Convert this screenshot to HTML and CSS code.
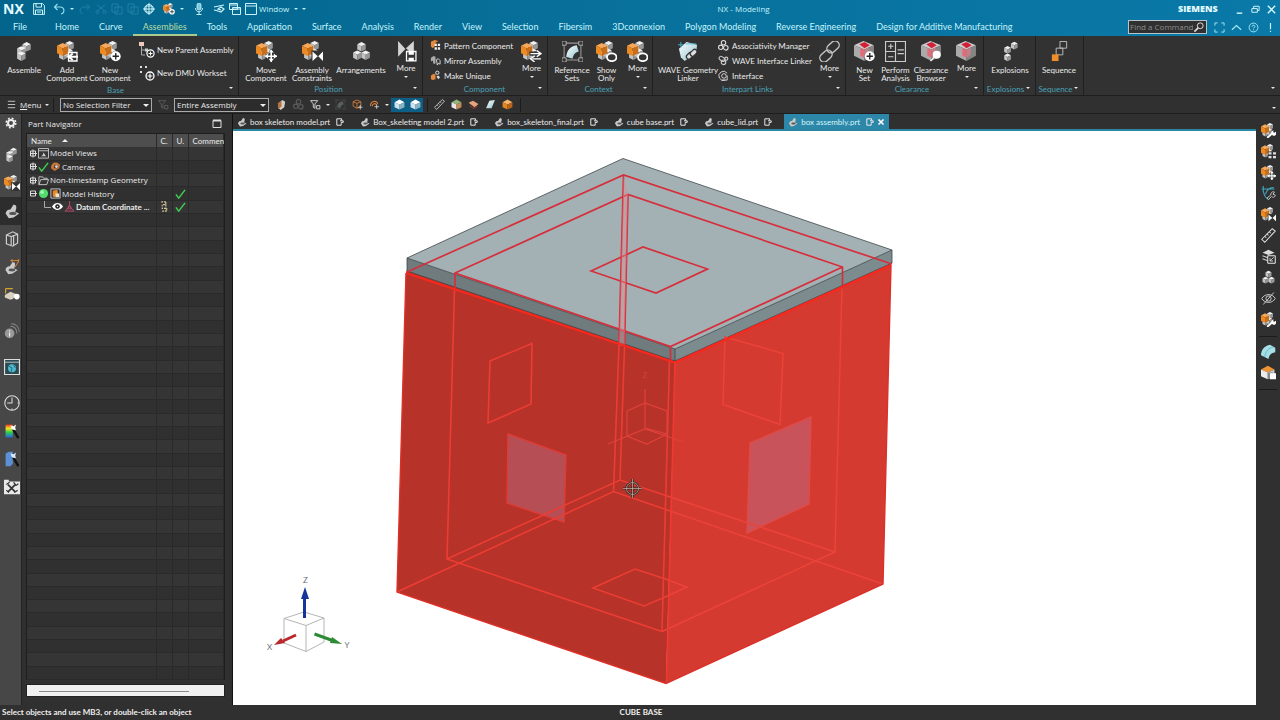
FILE: index.html
```html
<!DOCTYPE html>
<html lang="en">
<head>
<meta charset="utf-8">
<title>NX - Modeling</title>
<link rel="stylesheet" href="styles.css">
</head>
<body>
<svg class="defs" aria-hidden="true">
  <defs>
    <linearGradient id="rainbow" x1="0" y1="0" x2="0" y2="1"><stop offset="0" stop-color="#f03a1c"/><stop offset=".3" stop-color="#f2e32a"/><stop offset=".6" stop-color="#2fd04a"/><stop offset="1" stop-color="#2467e8"/></linearGradient>
    <linearGradient id="sheet" x1="0" y1="0" x2="1" y2="1"><stop offset="0" stop-color="#fff"/><stop offset="1" stop-color="#8fc4cf"/></linearGradient>
    <g id="gcube"><path d="M0 2 4 0 8 2 4 4z" fill="#f0f0f0"/><path d="M0 2 4 4V9L0 7z" fill="#c4c4c4"/><path d="M8 2 4 4V9L8 7z" fill="#979797"/></g>
    <g id="ocube"><path d="M0 3 6 0 12 3 6 6z" fill="#f7a858"/><path d="M0 3 6 6V14L0 11z" fill="#ee8a22"/><path d="M12 3 6 6V14L12 11z" fill="#c96e16"/></g>
  </defs>
  <symbol id="stack" viewBox="0 0 20 20"><use href="#gcube" x="8" y="1"/><use href="#gcube" x="3" y="5"/><use href="#gcube" x="3" y="10"/></symbol>
  <symbol id="comp" viewBox="0 0 20 20"><use href="#gcube" x="8" y="0"/><use href="#gcube" x="2" y="9"/><use href="#gcube" x="7" y="7"/><g transform="scale(.9)"><use href="#ocube" x="0" y="2"/></g></symbol>
  <symbol id="bplus" viewBox="0 0 20 20"><circle cx="15" cy="14.500" r="4.700" fill="#fff"/><path d="M12 14.500h6M15 11.500v6" stroke="#222" stroke-width="1.300"/></symbol>
  <symbol id="barrow" viewBox="0 0 20 20"><path d="M11 11h8v8h-8z" fill="#333" stroke="#fff" stroke-width="1.300"/><path d="M20 15h-8M15 12l-4 3 4 3" stroke="#fff" stroke-width="1.800" fill="none"/></symbol>
  <symbol id="bmove" viewBox="0 0 20 20"><path d="M9 14.500h11M14.500 9v11" stroke="#333" stroke-width="4"/><path d="M9 14.500h11M14.500 9v11" stroke="#fff" stroke-width="1.500"/><path d="M14.500 8l2.500 3h-5zM14.500 20l2.500-3h-5zM8.500 14.500l3-2.500v5zM20 14.500l-3-2.500v5z" fill="#fff"/></symbol>
  <symbol id="bbow" viewBox="0 0 20 20"><path d="M9 9h11v11H9z" fill="#333"/><path d="M10 10v9l5-4.500zM20 10v9l-4.500-4.500z" fill="#fff"/></symbol>
  <symbol id="bswap" viewBox="0 0 20 20"><path d="M8 12h9M14 17h5" stroke="#333" stroke-width="4"/><path d="M9 12h9M15 9l4 3-4 3M19 17h-8M13 14l-4 3 4 3" stroke="#fff" stroke-width="1.300" fill="none"/></symbol>
  <symbol id="beye" viewBox="0 0 20 20"><ellipse cx="15" cy="15.500" rx="4.500" ry="3.700" fill="#333" stroke="#fff" stroke-width="1.700"/></symbol>
  <symbol id="bgrid" viewBox="0 0 20 20"><path d="M9 10h11v10H9z" fill="#333"/><path d="M10 11h4v3h-4zM16 11h4v3h-4zM10 16h4v3h-4zM16 16h4v3h-4z" fill="#ddd"/></symbol>
  <symbol id="bwrench" viewBox="0 0 20 20"><path d="M9 19l6-5" stroke="#fff" stroke-width="2.500" stroke-linecap="round"/><path d="M14 14a3 3 0 0 1 3-4l-1 2 2 1 1.500-1.500A3 3 0 0 1 15 16z" fill="#fff"/></symbol>
  <symbol id="bdisk" viewBox="0 0 20 20"><path d="M10 10h9v9h-9z" fill="#333" stroke="#fff" stroke-width="1.200"/><path d="M12 10h5v3h-5zM12 16h5v3h-5z" fill="#fff"/></symbol>
  <symbol id="bow" viewBox="0 0 20 20"><path d="M2 0v15l7-7.500zM17 0v10H13L9.500 7z" fill="#d5d5d5"/></symbol>
  <symbol id="triple" viewBox="0 0 20 20"><use href="#gcube" x="6" y="1"/><use href="#gcube" x="2" y="9"/><use href="#gcube" x="10" y="9"/></symbol>
  <symbol id="parent" viewBox="0 0 16 16"><path d="M0 0h5v4H0z" fill="#f0c9bd"/><path d="M2.500 4v9M2.500 8H6M2.500 13H6" stroke="#aaa" fill="none"/><path d="M6 6.500h3v3H6z" fill="#ccc"/><circle cx="11.500" cy="11.500" r="3.600" fill="#333" stroke="#fff" stroke-width="1.200"/><path d="M9.500 11.500h4M11.500 9.500v4" stroke="#fff"/></symbol>
  <symbol id="dmu" viewBox="0 0 16 16"><path d="M1 1h2v2H1zM6 1h2v2H6zM1 6h2v2H1z" fill="#ddd"/><circle cx="11" cy="11" r="4" fill="#333" stroke="#fff" stroke-width="1.300"/><path d="M8.500 11h5M11 8.500v5" stroke="#fff" stroke-width="1.200"/></symbol>
  <symbol id="pattern" viewBox="0 0 12 12"><path d="M1 2l4-2 4 1-3 2v3l-3 3-2-2z" fill="#e58a3a"/><path d="M5 4h2.500v2.500H5zM8.500 4H11v2.500H8.500zM5 8h2.500v2.500H5zM8.500 8H11v2.500H8.500z" fill="#eee"/></symbol>
  <symbol id="mirror" viewBox="0 0 12 12"><path d="M1 3l3-2 2 1v7l-2 1-1-4-2 1z" fill="#aaa"/><path d="M7 5l2-1 2 2v4l-2-1-1 2z" fill="none" stroke="#ddd"/></symbol>
  <symbol id="unique" viewBox="0 0 12 12"><path d="M1 6l3-2 2 1v5l-3 1-2-1z" fill="#e58a3a"/><circle cx="8" cy="3" r="1.800" fill="none" stroke="#eee"/><path d="M7 7l2-1 2 2-2 2z" fill="#ddd"/></symbol>
  <symbol id="refset" viewBox="0 0 20 20"><path d="M2 2h16v16H2z" fill="none" stroke="#999"/><path d="M4 15C5 8 8 5 14 4l2 6c-4 1-5 3-6 7z" fill="url(#sheet)"/><path d="M0 0h4v4H0zM16 0h4v4h-4zM0 16h4v4H0zM16 16h4v4h-4z" fill="#333" stroke="#bbb" stroke-width=".8"/></symbol>
  <symbol id="wave" viewBox="0 0 22 22"><path d="M1 8 9 1l11 3-1 8-12 9-4-4z" fill="url(#sheet)"/><path d="M0 4h6M3 1v6M8 3h11" stroke="#49b6cf"/><g fill="#ddd" stroke="#333" stroke-width="1.300"><rect x="8" y="13" width="8" height="5" rx="2.500" transform="rotate(-45 12 15)"/><rect x="12" y="10" width="8" height="5" rx="2.500" transform="rotate(-45 16 12)"/></g></symbol>
  <symbol id="assoc" viewBox="0 0 12 12"><g fill="none" stroke="#ddd" stroke-width="1.200"><circle cx="6" cy="3" r="2.400"/><circle cx="3" cy="8" r="2.400"/><circle cx="8.500" cy="8.500" r="2.500"/></g></symbol>
  <symbol id="wil" viewBox="0 0 12 12"><g fill="none" stroke="#ccc" stroke-width="1.200"><rect x="1" y="2" width="7" height="4" rx="2" transform="rotate(30 4 4)"/><circle cx="6" cy="8" r="2.500"/><circle cx="9" cy="4" r="1.700"/></g></symbol>
  <symbol id="iface" viewBox="0 0 12 12"><g fill="none" stroke="#ddd"><path d="M10 3.500A5 5 0 1 0 8 11"/><circle cx="6.500" cy="6.500" r="2.500"/><path d="M10 6v5H4"/></g></symbol>
  <symbol id="chain" viewBox="0 0 20 20"><g fill="none" stroke="#c9c9c9" stroke-width="1.300"><rect x="7" y="2" width="13" height="8" rx="4" transform="rotate(-42 13 6)"/><rect x="0" y="10" width="13" height="8" rx="4" transform="rotate(-42 7 14)"/></g></symbol>
  <symbol id="clear" viewBox="0 0 20 20"><path d="M0 4 9 0l10 4-9 4z" fill="#ccc"/><path d="M0 4 10 8v11L0 14z" fill="#aaa"/><path d="M19 4 10 8v11l9-5z" fill="#858585"/><path d="M5 3l5-2 5 3-5 3z" fill="#d41f37"/><path d="M6 7l4 1v8l-4-2z" fill="#e36a78"/><path d="M10 8l4-2v7l-4 3z" fill="#c28088"/></symbol>
  <symbol id="bmag" viewBox="0 0 20 20"><path d="M9 19l4-4" stroke="#eee" stroke-width="1.500"/><circle cx="15" cy="13" r="3.800" fill="#fff"/></symbol>
  <symbol id="perform" viewBox="0 0 20 20"><path d="M.5.500h19v19H.5zM10 0v20M0 10h10M3 5h5M5.500 2.500v5M3 15h5M12 8.500h6M12 12h6" fill="none" stroke="#ccc" stroke-width="1.100"/></symbol>
  <symbol id="explode" viewBox="0 0 20 20"><g transform="scale(.8)"><use href="#gcube" x="13" y="1"/><use href="#gcube" x="5" y="6"/><use href="#gcube" x="5" y="15"/></g></symbol>
  <symbol id="seq" viewBox="0 0 20 22"><path d="M10.500.500h7v7h-7zM6.500 7.500h7v7h-7z" fill="none" stroke="#bbb"/><path d="M2 14h7v7H2z" fill="#f08c2a"/></symbol>
  <symbol id="part" viewBox="0 0 20 20"><path d="M2 13C3 9 5 8 8 8l4-6 3 1c1 3 0 5-1 8l5 2-7 5-6 1z" fill="#c9c9c9"/><ellipse cx="11" cy="13" rx="4.500" ry="2" fill="#555"/></symbol>
  <symbol id="doc" viewBox="0 0 10 10"><path d="M7 1H1v8h5.500V6.500M5 3.500h4v2H6M7 1v2" fill="none" stroke="#eee" stroke-width="1.200"/></symbol>
  <symbol id="save" viewBox="0 0 12 12"><path d="M.6.600h9l1.800 1.800v9H.6zM3 .6v3.500h5.500V.6M2.500 11.400V7h7v4.400M4 9h4" fill="none" stroke="#c9f3fa"/></symbol>
  <symbol id="undo" viewBox="0 0 12 12"><path d="M4.500 1 1.500 4l3 3M1.500 4H7c5 0 5 6 1 7" fill="none" stroke="#8fdcec" stroke-width="1.200"/></symbol>
  <symbol id="redo" viewBox="0 0 12 12"><path d="M7.500 1l3 3-3 3M10.500 4H5c-5 0-5 6-1 7" fill="none" stroke="#1e80a4"/></symbol>
  <symbol id="cut" viewBox="0 0 12 12"><path d="M2 2l8 6M10 2 2 8" stroke="#1e80a4"/><circle cx="2.500" cy="9" r="1.500" fill="none" stroke="#1e80a4"/><circle cx="9.500" cy="9" r="1.500" fill="none" stroke="#1e80a4"/></symbol>
  <symbol id="copy" viewBox="0 0 12 12"><path d="M1 1h6v8H1zM4 4h7v7H4z" fill="none" stroke="#1e80a4"/></symbol>
  <symbol id="target" viewBox="0 0 12 12"><path d="M3 3h6v6H3zM6 0v12M0 6h12" fill="none" stroke="#c9f3fa"/><circle cx="6" cy="6" r="4.500" fill="none" stroke="#c9f3fa"/></symbol>
  <symbol id="mic" viewBox="0 0 12 12"><rect x="4" y="0" width="4" height="7" rx="2" fill="#7fc8dc" stroke="#c9f3fa" stroke-width=".8"/><path d="M2.500 5c0 5 7 5 7 0M6 9v3M3.500 11.500h5" fill="none" stroke="#c9f3fa"/></symbol>
  <symbol id="touch" viewBox="0 0 12 12"><path d="M1 4l5-1 5-1M1 7l4 1 3 1 3-3-3-2-3 2 3 1" fill="none" stroke="#c9f3fa" stroke-width="1.200"/></symbol>
  <symbol id="wins" viewBox="0 0 12 12"><path d="M.5.500h8v6h-8zM.5 2h8M3.500 4.500h8v7h-8zM3.500 6h8" fill="#0a6a92" stroke="#c9f3fa"/></symbol>
  <symbol id="win" viewBox="0 0 12 12"><path d="M.5.500h11v11H.5zM.5 3h11" fill="none" stroke="#c9f3fa"/></symbol>
  <symbol id="gear" viewBox="0 0 12 12"><circle cx="6" cy="6" r="4.800" fill="none" stroke="#eee" stroke-width="1.500" stroke-dasharray="2 1.770"/><circle cx="6" cy="6" r="3" fill="none" stroke="#eee" stroke-width="2"/></symbol>
  <symbol id="box" viewBox="0 0 20 20"><path d="M3 5 11 1l6 3v11l-6 4-8-3zM3 5l6 2 8-3M9 7v12M12 6v12" fill="none" stroke="#ccc" stroke-width="1.500"/></symbol>
  <symbol id="partdim" viewBox="0 0 20 20"><use href="#part" width="18" height="18" x="0" y="2"/><path d="M8 2h11M10 0v4M18 0v4M18 3l-4 7" stroke="#d88632" stroke-width="1.200"/></symbol>
  <symbol id="reuse" viewBox="0 0 20 20"><path d="M1 10l7-4 8 3-5 6-3 1-7-3z" fill="#d8d0c0"/><path d="M2 2v6M2 2h9" stroke="#d8a030" stroke-width="1.500"/><circle cx="16" cy="12" r="3.500" fill="#fff"/></symbol>
  <symbol id="info" viewBox="0 0 20 20"><circle cx="7" cy="13" r="6" fill="#999"/><path d="M7 9v1.500M7 12v5" stroke="#eee" stroke-width="1.500"/><path d="M8 4c5 0 8 3 8 9M9 1c6 0 10 4 10 10" fill="none" stroke="#888" stroke-width="1.300"/></symbol>
  <symbol id="web" viewBox="0 0 20 20"><path d="M.7.700h18.600v18.600H.7z" fill="#2c4a52" stroke="#ddd" stroke-width="1.400"/><path d="M0 4h20" stroke="#ddd"/><circle cx="10" cy="11.500" r="5" fill="#4cb9cf"/><path d="M6 9l4 2-1 5M12 7l2 4" stroke="#2a5560" fill="none"/></symbol>
  <symbol id="clock" viewBox="0 0 20 20"><circle cx="10" cy="10" r="9" fill="none" stroke="#ddd" stroke-width="1.300"/><path d="M10 3v7H4M10 17v2M17 10h2" fill="none" stroke="#ddd" stroke-width="1.300"/></symbol>
  <symbol id="paint" viewBox="0 0 20 20"><path d="M2 2h9v16H2z" fill="url(#rainbow)"/><path d="M11 7l7 12" stroke="#111" stroke-width="3"/><path d="M8 3l4 1 3-2-1 4 1 3-5-1z" fill="#fff"/></symbol>
  <symbol id="process" viewBox="0 0 20 20"><path d="M2 3l4-2h5v15l-3 3H2z" fill="#5b8fd6"/><path d="M11 7l7 12" stroke="#111" stroke-width="3"/><path d="M8 3l4 1 3-2-1 4 1 3-5-1z" fill="#dce8ff"/></symbol>
  <symbol id="tools" viewBox="0 0 20 20"><path d="M0 1h6v2h14v16H0z" fill="#e8e8e8"/><path d="M5 16 14 7M5 7l9 9" stroke="#333" stroke-width="2.200"/><path d="M3 7l4-3M12 4l3 4 3-2M13 17l4-3M3 14l3 3" stroke="#333" stroke-width="1.500" fill="none"/></symbol>
  <symbol id="curvew" viewBox="0 0 20 20"><path d="M1 4h17M3 0v7c2 8 4 10 8 11M6 11c2-7 6-9 11-9" fill="none" stroke="#3fa5ba" stroke-width="1.500"/><path d="M8 16l5-4c0-4 3-5 5-4l-2 3 3 1c0 3-3 4-5 2l-4 4z" fill="#333" stroke="#ccc" stroke-width="1.200"/></symbol>
  <symbol id="ruler" viewBox="0 0 20 20"><path d="M1 15 15 1l4 3L5 19zM5 11l2 2M8 8l2 2M11 5l2 2" fill="none" stroke="#ddd" stroke-width="1.400"/></symbol>
  <symbol id="layers" viewBox="0 0 20 20"><path d="M2 5l8-4 8 4-8 3z" fill="#ddd"/><path d="M2 9l8 3M2 13l8 3" stroke="#ccc" stroke-width="1.500"/><path d="M9 9h10v10H9z" fill="#333" stroke="#eee" stroke-width="1.300"/><path d="M17 11l-5 5M12 12v4h4" stroke="#eee" fill="none"/></symbol>
  <symbol id="hide" viewBox="0 0 20 20"><path d="M1 10c4-7 14-7 18 0-4 7-14 7-18 0zM3 18 17 2" fill="none" stroke="#ccc" stroke-width="1.300"/><circle cx="10" cy="10" r="3.500" fill="none" stroke="#ccc" stroke-width="1.300"/></symbol>
  <symbol id="shell" viewBox="0 0 20 20"><path d="M0 15C0 8 5 2 12 1l7 4v6c-6 1-8 4-9 9z" fill="#a5dfe8"/><path d="M5 17C6 10 10 5 17 4" stroke="#5da9b5" fill="none"/></symbol>
  <symbol id="bcopy" viewBox="0 0 20 20"><path d="M9 10h7v8H9z" fill="#888"/><path d="M12 11h8v8h-8z" fill="#fff"/></symbol>
  <symbol id="halfcube" viewBox="0 0 20 20"><path d="M0 6 9 1l9 5-9 4z" fill="#ee9432"/><path d="M0 6l9 4v9l-9-4z" fill="#ececec"/><path d="M18 6l-9 4v9l9-4z" fill="#c9c9c9"/></symbol>
  <symbol id="solid" viewBox="0 0 20 20"><path d="M1 6 10 1l9 5-9 4z" fill="#f7b36b"/><path d="M1 6l9 4v9l-9-4z" fill="#e0861f"/><path d="M19 6l-9 4v9l9-4z" fill="#b8651a"/></symbol>
  <symbol id="wcube" viewBox="0 0 20 20"><path d="M1 6 10 1l9 5-9 4z" fill="#fff"/><path d="M1 6l9 4v9l-9-4z" fill="#cfe3ea"/><path d="M19 6l-9 4v9l9-4z" fill="#89b2c2"/></symbol>
  <symbol id="gsolid" viewBox="0 0 20 20"><path d="M1 6 10 1l9 5-9 4z" fill="#8fb77a"/><path d="M1 6l9 4v9l-9-4z" fill="#e8e8e8"/><path d="M19 6l-9 4v9l9-4z" fill="#c98a5a"/></symbol>
  <symbol id="face" viewBox="0 0 20 20"><path d="M1 7l8-4 10 6-7 6z" fill="#e9a27e"/><path d="M3 12l7 5 7-4" stroke="#8c3b28" stroke-width="2" fill="none"/></symbol>
  <symbol id="sheeti" viewBox="0 0 20 20"><path d="M2 17 8 3l10-1-6 15z" fill="url(#sheet)"/></symbol>
  <symbol id="funnel" viewBox="0 0 20 20"><path d="M1 3h13l-5 6v8l-3-2V9zM12 12h6v6h-6z" fill="none" stroke="currentColor" stroke-width="1.500"/></symbol>
  <symbol id="ring" viewBox="0 0 20 20"><path d="M3 13C2 4 14 1 16 9M6 13c0-5 6-6 8-2" fill="none" stroke="#d9803a" stroke-width="2"/><path d="M10 14h8M14 10v8" stroke="#ddd" stroke-width="1.500"/></symbol>
  <symbol id="wirebox" viewBox="0 0 20 20"><path d="M2 5l7-3 7 3v8l-7 4-7-4zM2 5l7 3 7-3M9 8v9" fill="none" stroke="#d9803a" stroke-width="1.500"/><path d="M11 15h8M15 11v8" stroke="#ddd" stroke-width="1.500"/></symbol>
  <symbol id="check" viewBox="0 0 12 12"><path d="M1 7l3 4 7-9" fill="none" stroke="#3fd055" stroke-width="1.600"/></symbol>
  <symbol id="plus" viewBox="0 0 8 8"><path d="M1.500 1.500h5v5h-5zM2 4h6M4 0v8" fill="none" stroke="#ddd"/></symbol>
  <symbol id="minus" viewBox="0 0 8 8"><path d="M1.500 1.500h5v5h-5zM2 4h6" fill="none" stroke="#ddd"/></symbol>
  <symbol id="views" viewBox="0 0 12 12"><path d="M.5.500h11v10.500H.5zM.5 3h11" fill="none" stroke="#ccc"/><path d="M3 9l2-1 1-3 2 3 1 1z" fill="#ccc"/></symbol>
  <symbol id="camera" viewBox="0 0 12 12"><path d="M1 8c0-5 3-7 7-6l3 2-1 4-5 3z" fill="#c9763a"/><path d="M4 8l1-4 4 1-1 3z" fill="#4a3326"/><circle cx="7" cy="6" r="1.500" fill="#ddd"/></symbol>
  <symbol id="filt" viewBox="0 0 12 12"><path d="M2 5l5-4 3 2-1 6-4 3-2-2z" fill="#d2cfc9"/><path d="M2 5l4-3v6l-3 3z" fill="#b8703c"/></symbol>
  <symbol id="folder" viewBox="0 0 12 12"><path d="M1 10.500V2h4l1 1.500h4V5M1 10.500 3 5h8.500l-2 5.500z" fill="none" stroke="#ccc"/></symbol>
  <symbol id="hist" viewBox="0 0 12 12"><path d="M1 1h10v10H1z" fill="none" stroke="#ccc"/><path d="M3 3l5-1 1 5-4 3-2-1z" fill="#e88a2c"/><path d="M6 6h4v4H6z" fill="#f3e2c8"/></symbol>
  <symbol id="eye" viewBox="0 0 12 12"><path d="M0 6c3-5 9-5 12 0-3 5-9 5-12 0z" fill="#fff"/><circle cx="6" cy="6" r="2.500" fill="#222"/><circle cx="6" cy="6" r=".8" fill="#fff"/></symbol>
  <symbol id="csys" viewBox="0 0 12 12"><path d="M6 0v6L1 11M6 6l5 5M3.500 8.500h5l-2.500-4zM1 11h10" fill="none" stroke="#c04a6a"/></symbol>
  <symbol id="sigma" viewBox="0 0 8 12"><path d="M1 1h5v3H2v4h5v3H1M6 1v10" fill="none" stroke="#d8c49a" stroke-width="1.200" stroke-dasharray="2 1"/></symbol>
</svg>

<header class="title">
  <div class="quick">
    <strong class="nx">NX</strong>
    <button aria-label="Save"><svg><use href="#save"/></svg></button>
    <button class="sp" aria-label="Undo"><svg><use href="#undo"/></svg></button>
    <i class="caret"></i>
    <button aria-label="Redo"><svg><use href="#redo"/></svg></button>
    <button aria-label="Cut"><svg><use href="#cut"/></svg></button>
    <button aria-label="Copy"><svg><use href="#copy"/></svg></button>
    <button aria-label="Paste"><svg><use href="#copy"/></svg></button>
    <button aria-label="Fit"><svg><use href="#target"/></svg></button>
    <button class="sp" aria-label="Component"><svg><use href="#comp"/><use href="#bplus"/></svg></button>
    <i class="caret"></i>
    <button class="sp" aria-label="Voice"><svg><use href="#mic"/></svg></button>
    <button class="sp" aria-label="Touch mode"><svg><use href="#touch"/></svg></button>
    <button aria-label="Switch window"><svg><use href="#wins"/></svg></button>
    <button class="winbtn"><svg><use href="#win"/></svg>Window <i class="caret"></i></button>
    <i class="caret bar"></i>
  </div>
  <h1>NX - Modeling</h1>
  <b class="brand">SIEMENS</b>
  <div class="wc">
    <button aria-label="Minimize"><svg viewBox="0 0 12 12"><path d="M3 10h6" stroke="#d9fbff" stroke-width="1.500"/></svg></button>
    <button aria-label="Restore"><svg viewBox="0 0 12 12"><path d="M2 5h6v4H2zM4 5V2.500h6V7H8" fill="none" stroke="#d9fbff"/></svg></button>
    <button aria-label="Close"><svg viewBox="0 0 12 12"><path d="M2 2l8 8M10 2l-8 8" stroke="#d9fbff" stroke-width="1.500"/></svg></button>
  </div>
</header>

<nav class="menu">
  <button>File</button><button>Home</button><button>Curve</button><button class="on">Assemblies</button><button>Tools</button><button>Application</button><button>Surface</button><button>Analysis</button><button>Render</button><button>View</button><button>Selection</button><button>Fibersim</button><button>3Dconnexion</button><button>Polygon Modeling</button><button>Reverse Engineering</button><button>Design for Additive Manufacturing</button>
  <div class="find"><input type="text" placeholder="Find a Command" aria-label="Find a Command"><svg viewBox="0 0 12 12"><circle cx="7.500" cy="4.500" r="3.500" fill="none" stroke="#ddd" stroke-width="1.200"/><path d="M5 7l-4.500 4.500" stroke="#ddd" stroke-width="2"/></svg></div>
  <div class="wc tools">
    <button aria-label="Full screen"><svg viewBox="0 0 12 12"><path d="M1 4V1h3M8 1h3v3M11 8v3H8M4 11H1V8" fill="none" stroke="#a8eaf5"/></svg></button>
    <button aria-label="Collapse ribbon"><svg viewBox="0 0 12 12"><path d="M1 8.500 6 4l5 4.500" fill="none" stroke="#a8eaf5" stroke-width="1.300"/></svg></button>
    <button aria-label="Help"><svg viewBox="0 0 12 12"><circle cx="6" cy="6" r="4.800" fill="none" stroke="#a8eaf5"/><path d="M4.500 5c0-2 3-2 3 0 0 1-1.500 1-1.500 2M6 8v1.200" fill="none" stroke="#a8eaf5"/></svg></button>
    <button aria-label="Alerts"><svg viewBox="0 0 12 12"><path d="M6 1v7M6 9.500V11" stroke="#c9f3fa" stroke-width="1.300"/></svg></button>
  </div>
</nav>

<section class="ribbon" aria-label="Assemblies ribbon">
  <div class="group g1">
    <div class="items">
      <button class="big w46"><svg><use href="#stack"/></svg>Assemble</button>
      <button class="big w38b"><svg><use href="#comp"/><use href="#barrow"/></svg>Add<br>Component</button>
      <button class="big w46"><svg><use href="#comp"/><use href="#bplus"/></svg>New<br>Component</button>
      <div class="rows two">
        <button><svg><use href="#parent"/></svg>New Parent Assembly</button>
        <button><svg><use href="#dmu"/></svg>New DMU Workset</button>
      </div>
    </div>
    <h2>Base</h2><i class="caret corner"></i>
  </div>
  <div class="group g2">
    <div class="items">
      <button class="big w46"><svg><use href="#comp"/><use href="#bmove"/></svg>Move<br>Component</button>
      <button class="big w46"><svg><use href="#comp"/><use href="#bbow"/></svg>Assembly<br>Constraints</button>
      <button class="big w52"><svg><use href="#triple"/></svg>Arrangements</button>
      <button class="big more w38"><svg><use href="#bow"/><use href="#bdisk"/></svg>More<i class="caret"></i></button>
    </div>
    <h2>Position</h2><i class="caret corner"></i>
  </div>
  <div class="group g3">
    <div class="items">
      <div class="rows">
        <button><svg><use href="#pattern"/></svg>Pattern Component</button>
        <button><svg><use href="#mirror"/></svg>Mirror Assembly</button>
        <button><svg><use href="#unique"/></svg>Make Unique</button>
      </div>
      <button class="big more w30 end"><svg><use href="#comp"/><use href="#bswap"/></svg>More<i class="caret"></i></button>
    </div>
    <h2>Component</h2><i class="caret corner"></i>
  </div>
  <div class="group g4">
    <div class="items">
      <button class="big w38"><svg><use href="#refset"/></svg>Reference<br>Sets</button>
      <button class="big w30"><svg><use href="#comp"/><use href="#beye"/></svg>Show<br>Only</button>
      <button class="big more w30"><svg><use href="#comp"/><use href="#beye"/></svg>More<i class="caret"></i></button>
    </div>
    <h2>Context</h2><i class="caret corner"></i>
  </div>
  <div class="group g5">
    <div class="items">
      <button class="big w58"><svg><use href="#wave"/></svg>WAVE Geometry<br>Linker</button>
      <div class="rows">
        <button><svg><use href="#assoc"/></svg>Associativity Manager</button>
        <button><svg><use href="#wil"/></svg>WAVE Interface Linker</button>
        <button><svg><use href="#iface"/></svg>Interface</button>
      </div>
      <button class="big more w30 end"><svg><use href="#chain"/></svg>More<i class="caret"></i></button>
    </div>
    <h2>Interpart Links</h2><i class="caret corner"></i>
  </div>
  <div class="group g6">
    <div class="items">
      <button class="big w30"><svg><use href="#clear"/><use href="#bplus"/></svg>New<br>Set</button>
      <button class="big w30"><svg><use href="#perform"/></svg>Perform<br>Analysis</button>
      <button class="big w38b"><svg><use href="#clear"/><use href="#bmag"/></svg>Clearance<br>Browser</button>
      <button class="big more w30"><svg><use href="#clear"/></svg>More<i class="caret"></i></button>
    </div>
    <h2>Clearance</h2><i class="caret corner"></i>
  </div>
  <div class="group g7">
    <div class="items"><button class="big w52"><svg><use href="#explode"/></svg>Explosions</button></div>
    <h2>Explosions</h2><i class="caret corner"></i>
  </div>
  <div class="group g8">
    <div class="items"><button class="big w46"><svg><use href="#seq"/></svg>Sequence</button></div>
    <h2>Sequence</h2><i class="caret corner"></i>
  </div>
  <div class="group rest"><i class="caret corner"></i></div>
</section>

<section class="selbar" aria-label="Selection bar">
  <button class="menubtn"><svg viewBox="0 0 12 12"><path d="M2 2.500h8M2 6h8M2 9.500h8" stroke="#ccc"/></svg><span><u>M</u>enu</span><i class="caret"></i></button>
  <span class="drop"><select aria-label="Selection filter"><option>No Selection Filter</option></select></span>
  <button class="dim w22" aria-label="Filter"><svg><use href="#funnel"/></svg></button>
  <span class="drop"><select aria-label="Selection scope"><option>Entire Assembly</option></select></span>
  <div class="tb">
    <button class="sp" aria-label="Body"><svg><use href="#filt"/></svg></button>
    <button class="dim" aria-label="Chain"><svg><use href="#assoc"/></svg></button>
    <button aria-label="Filter options"><svg><use href="#funnel"/></svg></button>
    <i class="caret"></i>
    <button class="dim" aria-label="Region"><svg><use href="#refset"/></svg></button>
    <button aria-label="Box select"><svg><use href="#wirebox"/></svg></button>
    <button aria-label="Lasso"><svg><use href="#ring"/></svg></button>
    <i class="caret"></i>
    <button class="hot" aria-label="Shaded"><svg><use href="#wcube"/></svg></button>
    <button class="hot" aria-label="Shaded with edges"><svg><use href="#wcube"/></svg></button>
  </div>
  <div class="tb">
    <button aria-label="Edge"><svg><use href="#ruler"/></svg></button>
    <button aria-label="Feature"><svg><use href="#gsolid"/></svg></button>
    <button aria-label="Face"><svg><use href="#face"/></svg></button>
    <button aria-label="Sheet"><svg><use href="#sheeti"/></svg></button>
    <button aria-label="Solid"><svg><use href="#solid"/></svg></button>
  </div>
  <i class="caret last"></i>
</section>

<main>
  <nav class="rail" aria-label="Resource bar">
    <button class="set" aria-label="Settings"><svg><use href="#gear"/></svg></button>
    <button aria-label="Assembly"><svg><use href="#stack"/></svg></button>
    <button aria-label="Constraints"><svg><use href="#comp"/><use href="#bbow"/></svg></button>
    <button class="on" aria-label="Part Navigator"><svg><use href="#part"/></svg></button>
    <button aria-label="Reuse"><svg><use href="#box"/></svg></button>
    <button aria-label="PMI"><svg><use href="#partdim"/></svg></button>
    <button aria-label="Library"><svg><use href="#reuse"/></svg></button>
    <button class="gap" aria-label="HD3D"><svg><use href="#info"/></svg></button>
    <button class="gap" aria-label="Web browser"><svg><use href="#web"/></svg></button>
    <button class="gap" aria-label="History"><svg><use href="#clock"/></svg></button>
    <button aria-label="Materials"><svg><use href="#paint"/></svg></button>
    <button aria-label="Process"><svg><use href="#process"/></svg></button>
    <button aria-label="Roles"><svg><use href="#tools"/></svg></button>
  </nav>

  <aside class="panel">
    <div class="phead"><h2>Part Navigator</h2><button aria-label="Undock"><svg viewBox="0 0 10 10"><path d="M1 1.500h8v7H1z" fill="none" stroke="#ddd"/><path d="M1 1.500h8" stroke="#ddd" stroke-width="2"/></svg></button></div>
    <div class="treebox">
      <table class="tree">
        <thead><tr><th>Name <i class="up"></i></th><th>C.</th><th>U.</th><th>Commen</th></tr></thead>
        <tbody id="rows">
          <tr><td><div class="node"><svg class="ex"><use href="#plus"/></svg><svg><use href="#views"/></svg>Model Views</div></td><td></td><td></td><td></td></tr>
          <tr><td><div class="node"><svg class="ex"><use href="#plus"/></svg><svg><use href="#check"/></svg><svg><use href="#camera"/></svg>Cameras</div></td><td></td><td></td><td></td></tr>
          <tr><td><div class="node"><svg class="ex"><use href="#plus"/></svg><svg><use href="#folder"/></svg>Non-timestamp Geometry</div></td><td></td><td></td><td></td></tr>
          <tr><td><div class="node"><svg class="ex"><use href="#minus"/></svg><svg viewBox="0 0 12 12"><circle cx="6" cy="6" r="5" fill="#4fdc6c"/><circle cx="4.500" cy="4.500" r="2" fill="#a5f3b4"/></svg><svg><use href="#hist"/></svg>Model History</div></td><td></td><td><svg><use href="#check"/></svg></td><td></td></tr>
          <tr><td><div class="node child"><svg class="elbow" viewBox="0 0 8 12"><path d="M1.500 0v6.500H8" fill="none" stroke="#aaa"/></svg><svg><use href="#eye"/></svg><svg><use href="#csys"/></svg><b>Datum Coordinate ...</b></div></td><td><svg class="ex"><use href="#sigma"/></svg></td><td><svg><use href="#check"/></svg></td><td></td></tr>
        </tbody>
      </table>
    </div>
    <div class="hscroll"><span></span></div>
  </aside>

  <section class="work">
    <div class="tabs" role="tablist">
      <button role="tab"><svg><use href="#part"/></svg>box skeleton model.prt<svg class="d"><use href="#doc"/></svg></button>
      <button role="tab"><svg><use href="#part"/></svg>Box_skeleting model 2.prt<svg class="d"><use href="#doc"/></svg></button>
      <button role="tab"><svg><use href="#part"/></svg>box_skeleton_final.prt<svg class="d"><use href="#doc"/></svg></button>
      <button role="tab"><svg><use href="#part"/></svg>cube base.prt<svg class="d"><use href="#doc"/></svg></button>
      <button role="tab"><svg><use href="#part"/></svg>cube_lid.prt<svg class="d"><use href="#doc"/></svg></button>
      <button role="tab" class="on" aria-selected="true"><svg><use href="#part"/></svg>box assembly.prt<svg class="d"><use href="#doc"/></svg><svg class="x" viewBox="0 0 8 8"><path d="M1.500 1.500l5 5M6.500 1.500l-5 5" stroke="#fff" stroke-width="1.600"/></svg></button>
    </div>
    <svg class="view" viewBox="233 131 1023 574" role="img" aria-label="Box assembly model">
      <path d="M406 272 407 270 675 360V362L666 683.500 397 592z" fill="#b73228"/>
      <path d="M675 360 891 263 883 584 666 683.500z" fill="#d43a30"/>
      <path d="M407 258 623 158.500 892 250 675 349z" fill="#a4b1b4"/>
      <path d="M407 258 675 349V361L407 271z" fill="#6f7b7d"/>
      <path d="M675 349 892 250V263L675 361z" fill="#7c8b8e"/>
      <path d="M407 258 623 158.500 892 250 675 349zM407 258v13l268 90 217-98v-13M675 349v12" fill="none" stroke="#40484a" stroke-width=".8"/>
      <path d="M508 434l58 21-2 67-57-19z" fill="#b54f55" stroke="#dd3c38" stroke-width="1.500"/>
      <path d="M750 443l61-26-2 87-62 29z" fill="#c9535a" stroke="#e04a48" stroke-width="1.500"/>
      <g fill="none" stroke="#d62f3c" stroke-width="1.700">
        <path d="M407 272 623.500 175 892 264"/>
        <path d="M455 290V273L628 194.500 842.500 267V285M455 273 670.500 346.500 842.500 267M670.500 346.500V360"/>
        <path d="M623.500 175 619 345M628 194.500 624.500 347" />
        <path d="M591 271 643 247 707.500 269 656 293z"/>
      </g>
      <path d="M623.500 176 628 194 624.500 346H619z" fill="#d98d92" opacity=".45"/>
      <g fill="none" stroke="#ec3d34" stroke-width="1.600">
        <path d="M619 345 613.500 491.500M624.500 347 620 480"/>
        <path d="M397 592 613.500 491.500 666 509.600"/>
        <path d="M454.500 290 447 559 620 480 666.500 495.700M447 559l215 72.500"/>
        <path d="M669.500 360 662 631.500"/>
        <path d="M490 361l42-17.500-1 60.500-43 19z"/>
        <path d="M664 578.500 635 569 593 588l51 18 20-8.500"/>
      </g>
      <g fill="none" stroke="#ec4339" stroke-width="1.500">
        <path d="M666 509.600 883 584M666.500 495.700 835 552 842 287M662 631.500 835 552"/>
        <path d="M725 337l58 16.500-3 71-57-20z"/>
        <path d="M664 578.500 687 587 664 597.500"/>
      </g>
      <g fill="none" stroke="#e0413a" stroke-width="1.200">
        <path d="M645 389v40M608 444l37-15 39 13M627 411l18-8 22 8v23l-20 10-20-8zM645 428l22 6"/>
      </g>
      <path d="M406 273 675 362.500 891 265" fill="none" stroke="#f8281f" stroke-width="2.200"/>
      <path d="M675 362 666.500 683" fill="none" stroke="#ee3a31" stroke-width="1.600"/>
      <path d="M406 273l-9 319 269 91.500L883 584l8-319" fill="none" stroke="#dc3028" stroke-width="1.400"/>
      <text x="645" y="378" class="zdim">Z</text>
      <g fill="none" stroke="#2b2b2b" stroke-width="2.200"><circle cx="632.500" cy="488.500" r="6"/><path d="M623 488.500h19M632.500 479v19"/></g>
      <g fill="none" stroke="#d8b8a8" stroke-width=".7"><circle cx="632.500" cy="488.500" r="6"/><path d="M623 488.500h19M632.500 479v19"/></g>
      <path d="M284 618.500 304 612 324 618 306 625.500zM284 618.500V643L306 651.500 324 642V618M306 625.500v26" fill="none" stroke="#b5b5b5"/>
      <path d="M304.500 618V597" stroke="#16349a" stroke-width="3"/><path d="M305 587l4 12h-8z" fill="#16349a"/>
      <path d="M296 635l-13 6" stroke="#b8282c" stroke-width="3"/><path d="M274 645l7-7 4 5z" fill="#b8282c"/>
      <path d="M314.500 634l18 6.500" stroke="#2d8a35" stroke-width="3"/><path d="M342 644l-10-7-2 6z" fill="#2d8a35"/>
      <g class="axis"><text x="305.500" y="583">Z</text><text x="269.500" y="650">X</text><text x="347" y="648">Y</text></g>
    </svg>
  </section>

  <nav class="rail right" aria-label="Quick tools">
    <button aria-label="Edit feature"><svg><use href="#comp"/><use href="#bwrench"/></svg></button>
    <button aria-label="Pattern component"><svg><use href="#comp"/><use href="#bgrid"/></svg></button>
    <button aria-label="Move component"><svg><use href="#comp"/><use href="#bmove"/></svg></button>
    <button aria-label="Edit curve"><svg><use href="#curvew"/></svg></button>
    <button aria-label="Constraints"><svg><use href="#comp"/><use href="#bbow"/></svg></button>
    <button aria-label="Measure"><svg><use href="#ruler"/></svg></button>
    <button aria-label="Layers"><svg><use href="#layers"/></svg></button>
    <button aria-label="Arrangements"><svg><use href="#triple"/></svg></button>
    <button aria-label="Hide"><svg><use href="#hide"/></svg></button>
    <button aria-label="Edit component"><svg><use href="#comp"/><use href="#bwrench"/></svg></button>
    <hr>
    <button aria-label="Sheet body"><svg><use href="#shell"/></svg></button>
    <button aria-label="Copy body"><svg><use href="#halfcube"/><use href="#bcopy"/></svg></button>
    <hr>
  </nav>
</main>

<footer><span>Select objects and use MB3, or double-click an object</span><span>CUBE BASE</span></footer>
<script src="app.js"></script>
</body>
</html>
```
FILE: styles.css
```css
* { box-sizing: border-box; }
body {
  margin: 0;
  min-height: 100vh;
  display: flex;
  flex-direction: column;
  background: #303030;
  color: #eaeaea;
  font: 8px/12px Lato, "Open Sans", sans-serif;
}
button {
  margin: 0;
  padding: 0;
  border: 0;
  background: none;
  color: inherit;
  font: inherit;
  white-space: nowrap;
}
h1, h2 { margin: 0; font: inherit; }
svg { display: block; flex: none; }
.defs { position: absolute; width: 0; height: 0; }

.caret {
  display: inline-block;
  flex: none;
  border: 3px solid transparent;
  border-top-color: #e8e8e8;
  border-bottom: 0;
}

/* title bar */
.title, .menu {
  display: flex;
  align-items: center;
  height: 18px;
  background: linear-gradient(90deg, #03658c, #08719c 50%, #0a79a8);
  color: #c4f4fb;
}
.title h1 { flex: 1; text-align: center; font-family: "Open Sans", sans-serif; }
.quick { display: flex; align-items: center; }
.nx {
  width: 31px;
  padding-left: 3px;
  color: #e4fcff;
  font-family: "Open Sans", sans-serif;
  font-size: 14px;
  line-height: 18px;
}
.quick button { width: 16px; display: flex; justify-content: center; font-family: "Open Sans", sans-serif; }
.quick svg { width: 12px; height: 12px; }
.quick .caret { margin: 0 3px; border-width: 2px; border-bottom: 0; border-top-color: #b8eef8; }
.sp { margin-left: 3px; }
.quick .sp { margin-left: 4px; }
.quick .winbtn { width: auto; align-items: center; gap: 2px; padding-left: 2px; }
.quick .bar { margin-left: 1px; }
.brand {
  width: 53px;
  color: #e4fcff;
  font-family: "Open Sans", sans-serif;
  font-size: 9px;
  font-weight: 800;
}
.wc { display: flex; padding-right: 1px; }
.wc button { width: 16px; display: flex; justify-content: center; }
.wc svg { width: 11px; height: 11px; }

/* menu tabs */
.menu { font-size: 9px; }
.menu button { height: 18px; padding: 0 10px; }
.menu button:first-child { padding: 0 18px 0 13px; }
.menu .on { color: #b8dca0; box-shadow: inset 0 -2px #a9c98f; height: 17px; }
.find {
  display: flex;
  align-items: center;
  width: 79px;
  height: 14px;
  margin-left: auto;
  padding-right: 2px;
  border: 1px solid #b9c4c8;
  background: #303030;
}
.find input {
  flex: 1;
  min-width: 0;
  padding: 0 1px;
  border: 0;
  background: none;
  color: #ddd;
  font: 8px/12px "Open Sans", sans-serif;
}
.find input::placeholder { color: #8d8d8d; }
.find svg { width: 10px; height: 10px; }
.menu .tools { padding-left: 4px; }
.menu .tools button { width: 17px; padding: 0; align-items: center; }

/* ribbon */
.ribbon { display: flex; height: 60px; border-bottom: 1px solid #1e1e1e; background: #323232; }
.group {
  position: relative;
  display: flex;
  flex-direction: column;
  flex: none;
  padding-top: 5px;
}
.group:not(.rest) { border-right: 1px solid #1f1f1f; }
.g1 { width: 239px; padding-left: 1px; }
.g2 { width: 184px; padding-left: 4px; }
.g3 { width: 125px; padding-left: 7px; }
.g4 { width: 105px; padding-left: 5px; }
.g5 { width: 193px; padding-left: 5px; }
.g6 { width: 138px; padding-left: 3px; }
.g7 { width: 52px; }
.g8 { width: 48px; }
.rest { flex: 1; }
.items { display: flex; height: 43px; }
.group h2 { line-height: 12px; padding-right: 8px; text-align: center; color: #4ba0b6; }
.corner { position: absolute; right: 5px; bottom: 6px; border-width: 2px; border-bottom: 0; }
.big {
  display: flex;
  flex-direction: column;
  align-items: center;
  flex: none;
  line-height: 8px;
}
.big svg { width: 21px; height: 21px; margin-bottom: 4px; }
.more svg { margin-bottom: 2px; }
.more .caret { margin-top: 4px; border-width: 2px; border-bottom: 0; }
.w22 { width: 22px; }
.w30 { width: 31px; }
.w38 { width: 38px; }
.w38b { width: 40px; }
.w46 { width: 46px; }
.w52 { width: 52px; }
.w58 { width: 60px; }
.end { margin-left: auto; }
.rows { display: flex; flex-direction: column; margin-top: -3px; }
.rows button { display: flex; align-items: center; gap: 3px; height: 15px; }
.rows svg { width: 11px; height: 11px; }
.two { padding-left: 6px; }
.two button { height: 23px; gap: 2px; }
.two svg { width: 16px; height: 16px; }

/* selection bar */
.selbar {
  display: flex;
  align-items: center;
  height: 18px;
  border-bottom: 1px solid #1e1e1e;
  background: #303030;
  font-family: "Open Sans", sans-serif;
}
.menubtn { display: flex; align-items: center; gap: 3px; width: 54px; height: 14px; padding-left: 6px; border-right: 1px solid #1c1c1c; }
.menubtn svg { width: 11px; height: 11px; }
.menubtn .caret { border-width: 2px; border-bottom: 0; }
.drop { position: relative; width: 95px; height: 14px; }
.menubtn + .drop { width: 92px; margin-left: 6px; }
.drop::after {
  content: "";
  position: absolute;
  right: 3px;
  top: 6px;
  border: 3px solid transparent;
  border-top-color: #eee;
  border-bottom: 0;
  pointer-events: none;
}
.drop select {
  appearance: none;
  display: block;
  width: 100%;
  height: 14px;
  padding: 0 2px;
  border: 1px solid #aaa;
  border-radius: 0;
  background: #2c2c2c;
  color: #eaeaea;
  font: inherit;
}
.selbar .dim { opacity: .25; }
.selbar svg { width: 11px; height: 11px; }
.selbar button { flex: none; }
.tb { display: flex; align-items: center; height: 14px; padding: 0 4px 0 1px; border-right: 1px solid #1c1c1c; }
.tb + .tb { padding-left: 3px; }
.tb button, .w22 { display: flex; align-items: center; justify-content: center; height: 14px; }
.tb button { width: 17px; }
.tb .caret { margin: 0 2px; border-width: 2px; border-bottom: 0; }
.tb .hot { width: 16px; background: #0d5f86; }
.last { margin: 6px 4px 0 auto; border-width: 2px; border-bottom: 0; }

/* main area */
main { flex: 1; display: flex; min-height: 0; }
.rail { display: flex; flex-direction: column; width: 21px; flex: none; background: #474747; }
.rail button {
  display: flex;
  align-items: center;
  justify-content: center;
  height: 28px;
  flex: none;
  padding-left: 2px;
}
.rail svg { width: 16px; height: 16px; }
.rail .set { height: 18px; margin-bottom: 9px; padding: 0; }
.rail .set svg { width: 12px; height: 12px; }
.rail .on { background: #2d2d2d; }
.rail .gap { margin-top: 8px; }
.right { width: 24px; padding-top: 6px; background: #303030; }
.right button { height: 21px; padding: 0; }
.right svg { width: 15px; height: 15px; }
.right hr { width: 18px; margin: 6px auto 4px; border: 0; border-top: 1px solid #1b1b1b; }

.panel {
  display: flex;
  flex-direction: column;
  width: 212px;
  flex: none;
  padding: 0 7px 8px 4px;
  border-left: 1px solid #222;
  border-right: 1px solid #111;
  font-family: "Open Sans", sans-serif;
}
.phead { display: flex; align-items: center; justify-content: space-between; height: 19px; padding: 0 3px 0 2px; }
.phead svg { width: 10px; height: 10px; }
.treebox { flex: 1; border: 1px solid #1e1e1e; border-bottom: 0; overflow: hidden; }
.tree { width: 100%; height: 100%; table-layout: fixed; border-collapse: collapse; }
.tree th, .tree td { height: 13px; padding: 0; border-right: 1px solid #292929; text-align: left; font-weight: 400; line-height: 12px; white-space: nowrap; }
.tree th { padding-left: 4px; background: #4e4e4e; font-family: Lato, sans-serif; }
.tree th:nth-child(1) { width: 129px; }
.tree th:nth-child(2), .tree th:nth-child(3) { width: 16px; }
.tree tbody tr { background: #353535; }
.tree tbody tr:nth-child(even) { background: #303030; }
.tree td { border-bottom: 1px solid #2a2a2a; }
.tree td > svg { margin: 0 auto; }
.tree svg { width: 11px; height: 11px; }
.tree .ex { width: 8px; }
.node { display: flex; align-items: center; gap: 1px; height: 12px; padding-left: 2px; }
.node.child { padding-left: 16px; }
.node .elbow { width: 8px; height: 12px; }
.node b { font-family: Lato, sans-serif; }
.up { display: inline-block; margin: 0 0 2px 8px; border: 3px solid transparent; border-bottom-color: #eee; border-top: 0; }
.hscroll { height: 13px; margin-top: 4px; padding: 6px 35px 0 12px; border: 1px solid #222; background: #f0f0f0; }
.hscroll span { display: block; height: 1px; background: #888; }

.work { flex: 1; display: flex; flex-direction: column; min-width: 0; }
.tabs { display: flex; height: 17px; border-bottom: 2px solid #2b86a3; }
.tabs button { display: flex; align-items: center; gap: 3px; padding: 0 12px 0 4px; }
.tabs svg { width: 10px; height: 10px; }
.tabs .d { width: 8px; height: 8px; margin-left: 3px; }
.tabs .on { padding-right: 4px; background: #2d87a8; color: #d5f6fc; }
.tabs .x { width: 8px; height: 8px; }
.view { flex: 1; width: 100%; min-height: 0; background: #fff; }
.zdim { fill: #d8433c; font-size: 8px; text-anchor: middle; }
.axis { fill: #6b6b78; font-size: 8px; text-anchor: middle; }

footer {
  display: grid;
  grid-template-columns: 1fr auto 1fr;
  height: 15px;
  padding: 0 0 0 2px;
  line-height: 15px;
  font-weight: 700;
  color: #eee;
}
```
FILE: app.js
```js
// Fill the rest of the navigator with blank striped rows.
const body = document.getElementById("rows");
for (let i = body.rows.length; i < 40; i++) {
  const row = body.insertRow();
  for (let c = 0; c < 4; c++) row.insertCell();
}
```
